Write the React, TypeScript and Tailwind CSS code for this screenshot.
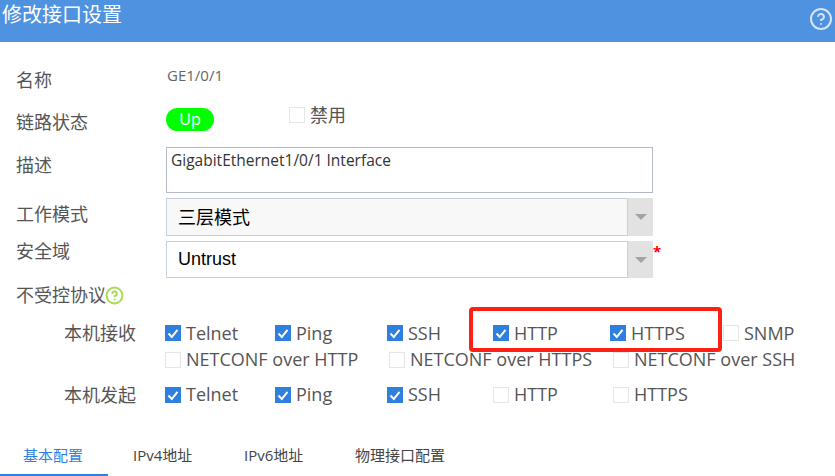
import { CircleHelp } from "lucide-react";

const font = { cjk: "font-['Open_Sans','Noto_Sans_CJK_SC',sans-serif]" };

const Checkbox = ({ label, checked, className }: { label: string; checked?: boolean; className?: string }) => {
  return (
    <div className={`flex items-center shrink-0 ${className ?? ""}`}>
      {checked ? (
        <span className="w-4 h-4 bg-[#2f7fdf] flex items-center justify-center">
          <svg width="16" height="16" viewBox="0 0 16 16" fill="none">
            <path d="M3.5 8.5 L6.8 12 L12.5 4.8" stroke="white" strokeWidth="2" />
          </svg>
        </span>
      ) : (
        <span className="w-4 h-4 bg-white border border-[#e6e6e6]" />
      )}
      <span className="ml-[5px] text-[18px] leading-none text-[#555] -mt-[1px]">{label}</span>
    </div>
  );
};

const Select = ({ value, bg, valueClass }: { value: string; bg: string; valueClass: string }) => {
  return (
    <div className="flex w-[487px] h-full">
      <div className={`flex-1 border border-[#c3d1e3] flex items-center pl-[11px] text-[18px] text-black ${bg} ${valueClass}`}>
        {value}
      </div>
      <div className="w-[25px] bg-[#e2e2e2] flex items-center justify-center">
        <span className="w-0 h-0 border-x-[6px] border-x-transparent border-t-[6px] border-t-[#a3a3a3]" />
      </div>
    </div>
  );
};

const App = () => {
  return (
    <div className={`relative w-[835px] h-[476px] overflow-hidden bg-white ${font.cjk}`}>
      <div className="h-[42px] bg-[#4f92e0] flex items-start justify-between pl-[2px] pr-[2px]">
        <span className="text-[20px] leading-[30px] text-white">修改接口设置</span>
        <CircleHelp size={24} strokeWidth={2} className="text-[#d5e4f6] mt-[7px]" />
      </div>

      <div className="pl-[16px]">
        <div className="flex items-start h-[47px] pt-[23px]">
          <span className="w-[150px] text-[18px] leading-[26px] text-[#555] mt-[2px]">名称</span>
          <span className="text-[15px] leading-[20px] text-[#666] ml-[1px]">GE1/0/1</span>
        </div>

        <div className="flex items-start h-[58px] pt-[19px]">
          <span className="w-[150px] text-[18px] leading-[26px] text-[#555] mt-[1px]">链路状态</span>
          <span className="w-[48px] h-[23px] rounded-full bg-[#00ff00] text-white text-[16px] leading-[23px] text-center">Up</span>
          <div className="flex items-center ml-[75px] -mt-[5px]">
            <span className="w-4 h-4 bg-white border border-[#e6e6e6]" />
            <span className="ml-[5px] text-[18px] leading-[24px] text-[#555]">禁用</span>
          </div>
        </div>

        <div className="flex items-start h-[46px]">
          <span className="w-[150px] text-[18px] leading-[26px] text-[#555] mt-[5px]">描述</span>
          <div className="w-[487px] h-[46px] border border-[#b5b9cc] pl-[4px] pt-[1px] text-[15.5px] leading-[22px] text-[#333]">
            GigabitEthernet1/0/1 Interface
          </div>
        </div>

        <div className="flex items-start h-[38px] mt-[5px]">
          <span className="w-[150px] text-[18px] leading-[26px] text-[#555] mt-[3px]">工作模式</span>
          <Select value="三层模式" bg="bg-[#f8f8f8]" valueClass="" />
        </div>

        <div className="flex items-start h-[37px] mt-[5px]">
          <span className="w-[150px] text-[18px] leading-[26px] text-[#555] -mt-[3px]">安全域</span>
          <Select value="Untrust" bg="bg-white" valueClass="font-['Liberation_Sans',sans-serif]" />
          <span className="text-[#f00] text-[15px] leading-[15px] font-bold mt-[3px]">*</span>
        </div>

        <div className="flex items-center h-[26px] mt-[4px]">
          <span className="text-[18px] leading-[26px] text-[#555]">不受控协议</span>
          <CircleHelp size={19} strokeWidth={2.5} className="text-[#a6dc52] -ml-[1px]" />
        </div>

        <div className="flex h-[26px] items-center mt-[12px]">
          <span className="w-[149px] pl-[48px] text-[18px] leading-[26px] text-[#555]">本机接收</span>
          <Checkbox label="Telnet" checked className="w-[110px]" />
          <Checkbox label="Ping" checked className="w-[112px]" />
          <Checkbox label="SSH" checked className="w-[106px]" />
          <Checkbox label="HTTP" checked className="w-[117px]" />
          <Checkbox label="HTTPS" checked className="w-[113px]" />
          <Checkbox label="SNMP" />
        </div>

        <div className="flex h-[27px] items-center">
          <span className="w-[149px]" />
          <Checkbox label="NETCONF over HTTP" className="w-[224px]" />
          <Checkbox label="NETCONF over HTTPS" className="w-[224px]" />
          <Checkbox label="NETCONF over SSH" />
        </div>

        <div className="flex h-[27px] items-center mt-[8px]">
          <span className="w-[149px] pl-[48px] text-[18px] leading-[26px] text-[#555]">本机发起</span>
          <Checkbox label="Telnet" checked className="w-[110px]" />
          <Checkbox label="Ping" checked className="w-[112px]" />
          <Checkbox label="SSH" checked className="w-[106px]" />
          <Checkbox label="HTTP" className="w-[120px]" />
          <Checkbox label="HTTPS" />
        </div>
      </div>

      <div className="flex h-[43px] mt-[25px] text-[15px] leading-[22px] text-[#444]">
        <div className="w-[108px] mr-[2px] h-[43px] pl-[23px] pt-[11px] text-[#2f7fdf] border-b-2 border-[#2f7fdf]">基本配置</div>
        <div className="w-[111px] pl-[23px] pt-[11px]">IPv4地址</div>
        <div className="w-[111px] pl-[23px] pt-[11px]">IPv6地址</div>
        <div className="pl-[23px] pt-[11px]">物理接口配置</div>
      </div>

      <div className="absolute left-[469px] top-[307px] w-[253px] h-[45px] border-[4px] border-[#ff2015] rounded-[4px]" />
    </div>
  );
};

export default App;
